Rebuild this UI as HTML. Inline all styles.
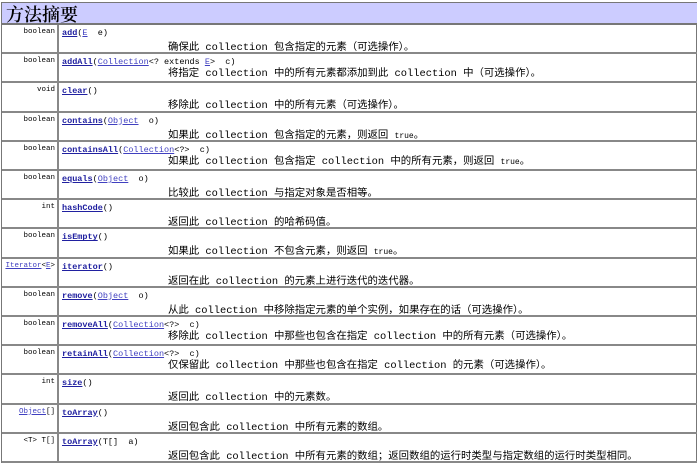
<!DOCTYPE html>
<html><head><meta charset="utf-8"><style>
body{margin:0;background:#fff;width:700px;height:466px;overflow:hidden;font-family:"Liberation Mono","Noto Sans CJK SC",monospace}
.t{position:absolute;left:1px;top:2px;width:696px;height:461px;border:1px solid #777;box-sizing:border-box}
.h{position:absolute;left:2px;top:3px;width:695px;height:22px;background:#ccccff;border-bottom:2px solid #777;font-family:"Noto Serif CJK SC",serif;font-size:18px;font-weight:600;line-height:22px;padding-left:4px;box-sizing:border-box}
.r{position:absolute;left:2px;width:695px;height:29.2px;border-bottom:2px solid #888;box-sizing:border-box}
.l{position:absolute;left:0;top:0;width:57px;height:100%;border-right:2px solid #888;font-size:7.5px;text-align:right;padding:3px 2px 0 0;box-sizing:border-box}
.m{position:absolute;left:60px;top:3px;font-size:8.5px;white-space:nowrap}
.m b{color:#2020a0;text-decoration:underline}
.k{color:#4040c0;text-decoration:underline}
.d{position:absolute;left:166px;top:13px;font-size:10.4px;white-space:nowrap;font-family:"Liberation Mono","Noto Sans CJK SC",monospace}
</style></head><body>
<div class="t"></div>
<div class="h">方法摘要</div>
<div class="r" style="top:25px"><div class="l">boolean</div><div class="m"><b>add</b>(<span class="k">E</span>&nbsp; e)</div><div class="d">确保此 collection 包含指定的元素（可选操作）。</div></div>
<div class="r" style="top:54.2px"><div class="l">boolean</div><div class="m"><b>addAll</b>(<span class="k">Collection</span>&lt;? extends <span class="k">E</span>&gt;&nbsp; c)</div><div class="d" style="top:10px">将指定 collection 中的所有元素都添加到此 collection 中（可选操作）。</div></div>
<div class="r" style="top:83.4px"><div class="l">void</div><div class="m"><b>clear</b>()</div><div class="d">移除此 collection 中的所有元素（可选操作）。</div></div>
<div class="r" style="top:112.6px"><div class="l">boolean</div><div class="m"><b>contains</b>(<span class="k">Object</span>&nbsp; o)</div><div class="d">如果此 collection 包含指定的元素，则返回 <span style="font-size:8px">true</span>。</div></div>
<div class="r" style="top:141.8px"><div class="l">boolean</div><div class="m"><b>containsAll</b>(<span class="k">Collection</span>&lt;?&gt;&nbsp; c)</div><div class="d" style="top:10px">如果此 collection 包含指定 collection 中的所有元素，则返回 <span style="font-size:8px">true</span>。</div></div>
<div class="r" style="top:171px"><div class="l">boolean</div><div class="m"><b>equals</b>(<span class="k">Object</span>&nbsp; o)</div><div class="d">比较此 collection 与指定对象是否相等。</div></div>
<div class="r" style="top:200.2px"><div class="l">int</div><div class="m"><b>hashCode</b>()</div><div class="d">返回此 collection 的哈希码值。</div></div>
<div class="r" style="top:229.4px"><div class="l">boolean</div><div class="m"><b>isEmpty</b>()</div><div class="d">如果此 collection 不包含元素，则返回 <span style="font-size:8px">true</span>。</div></div>
<div class="r" style="top:258.6px"><div class="l"><span class="k">Iterator</span>&lt;<span class="k">E</span>&gt;</div><div class="m"><b>iterator</b>()</div><div class="d">返回在此 collection 的元素上进行迭代的迭代器。</div></div>
<div class="r" style="top:287.8px"><div class="l">boolean</div><div class="m"><b>remove</b>(<span class="k">Object</span>&nbsp; o)</div><div class="d">从此 collection 中移除指定元素的单个实例，如果存在的话（可选操作）。</div></div>
<div class="r" style="top:317px"><div class="l">boolean</div><div class="m"><b>removeAll</b>(<span class="k">Collection</span>&lt;?&gt;&nbsp; c)</div><div class="d" style="top:10px">移除此 collection 中那些也包含在指定 collection 中的所有元素（可选操作）。</div></div>
<div class="r" style="top:346.2px"><div class="l">boolean</div><div class="m"><b>retainAll</b>(<span class="k">Collection</span>&lt;?&gt;&nbsp; c)</div><div class="d" style="top:10px">仅保留此 collection 中那些也包含在指定 collection 的元素（可选操作）。</div></div>
<div class="r" style="top:375.4px"><div class="l">int</div><div class="m"><b>size</b>()</div><div class="d">返回此 collection 中的元素数。</div></div>
<div class="r" style="top:404.6px"><div class="l"><span class="k">Object</span>[]</div><div class="m"><b>toArray</b>()</div><div class="d">返回包含此 collection 中所有元素的数组。</div></div>
<div class="r" style="top:433.8px"><div class="l">&lt;T&gt; T[]</div><div class="m"><b>toArray</b>(T[]&nbsp; a)</div><div class="d">返回包含此 collection 中所有元素的数组；返回数组的运行时类型与指定数组的运行时类型相同。</div></div>
</body></html>
